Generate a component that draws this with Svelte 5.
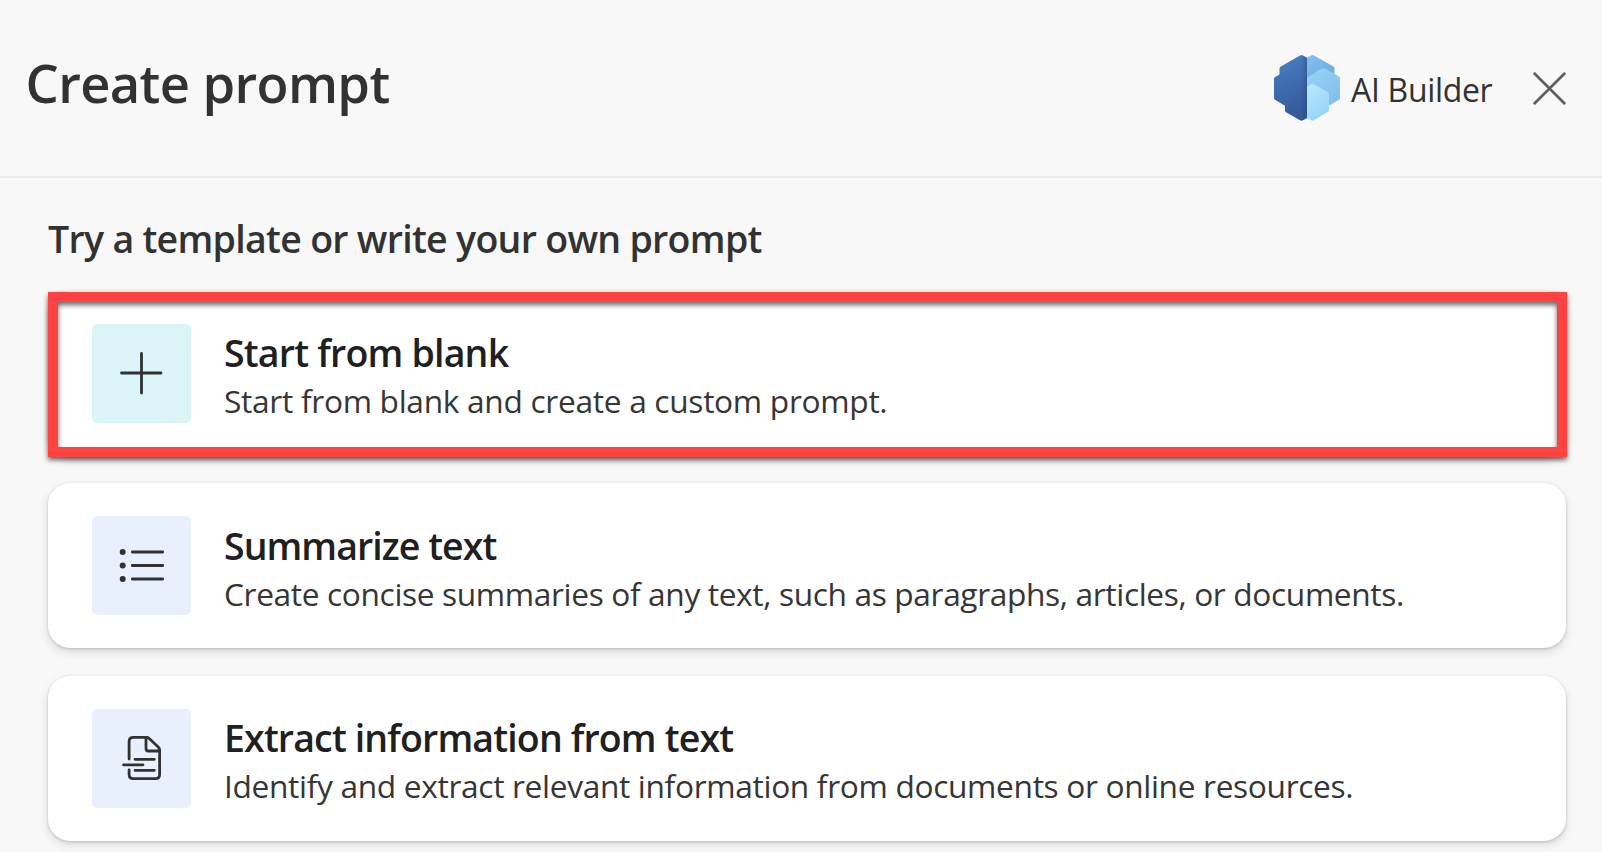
<script>
  const templates = [
    {
      id: 'blank',
      title: 'Start from blank',
      text: 'Start from blank and create a custom prompt.',
      highlighted: true
    },
    {
      id: 'summarize',
      title: 'Summarize text',
      text: 'Create concise summaries of any text, such as paragraphs, articles, or documents.'
    },
    {
      id: 'extract',
      title: 'Extract information from text',
      text: 'Identify and extract relevant information from documents or online resources.'
    }
  ];
  const half =
    'M33 2.800 29 .5q-1.500-.9-3 0L6.800 11.400Q5.500 12.200 5.500 13.500V19.500L1 22.100Q0 22.700 0 24V43Q0 44.200 1 44.800L11 50.700V55.500Q11 56.700 12 57.300L26 65.300Q27.500 66.200 29 65.300L33 63Z';
</script>

<div class="panel">
  <header>
    <h1>Create prompt</h1>
    <div class="brand">
      <svg class="logo" viewBox="0 0 66 66" aria-hidden="true">
        <defs>
          <linearGradient id="navy" x1="0" y1="0" x2="0.2" y2="1">
            <stop offset="0" stop-color="#4a80c4" />
            <stop offset="0.5" stop-color="#3f6db0" />
            <stop offset="1" stop-color="#345a9a" />
          </linearGradient>
          <linearGradient id="edge" x1="0" y1="0" x2="1" y2="0">
            <stop offset="0.8" stop-color="#1d3260" stop-opacity="0" />
            <stop offset="1" stop-color="#1d3260" stop-opacity="0.3" />
          </linearGradient>
          <linearGradient id="sky" x1="0" y1="0" x2="1" y2="1">
            <stop offset="0" stop-color="#83bfee" />
            <stop offset="1" stop-color="#69a8e0" />
          </linearGradient>
          <linearGradient id="light" x1="0" y1="0" x2="0.6" y2="1">
            <stop offset="0" stop-color="#9ad4f7" />
            <stop offset="1" stop-color="#80c0ee" />
          </linearGradient>
          <linearGradient id="pale" x1="0" y1="0" x2="0.5" y2="1">
            <stop offset="0" stop-color="#b8e7fd" />
            <stop offset="1" stop-color="#98d5f8" />
          </linearGradient>
        </defs>
        <path fill="url(#sky)" d="M33 2.8 37 .5q1.500-.9 3 0L59.500 11.500q1 .7 1 2V30H33Z" />
        <path fill="url(#light)" d="M33 22.400 48.200 13.600q1.500-.9 3 0L65 21.500q1 .7 1 2V43q0 1.200-1 1.800L52 52.500H33Z" />
        <path fill="url(#pale)" d="M33 31.600 37 29.300q1.500-.9 3 0L54 37.300q1 .7 1 2V55q0 1.200-1 1.800L40 65.300q-1.500.9-3 0L33 63Z" />
        <path fill="url(#navy)" d={half} />
        <path fill="url(#edge)" d={half} />
      </svg>
      <span>AI Builder</span>
      <button class="close" aria-label="Close">
        <svg viewBox="0 0 33 33"><path d="M.9.900 32.100 32.100M32.100.900.900 32.100" /></svg>
      </button>
    </div>
  </header>

  <main>
    <h2>Try a template or write your own prompt</h2>
    <div class="cards">
      {#each templates as item (item.id)}
        <div class="card {item.id}" class:highlighted={item.highlighted}>
          <svg class="tile" viewBox="0 0 99 99" aria-hidden="true">
            {#if item.id === 'blank'}
              <path d="M49.500 29.500V69M29.500 49H69" />
            {:else if item.id === 'summarize'}
              <g class="dots">
                <circle cx="30.700" cy="36" r="3" />
                <circle cx="30.700" cy="49.500" r="3" />
                <circle cx="30.700" cy="63" r="3" />
              </g>
              <path d="M40.300 36H70.700M40.300 49.500H70.700M40.300 63H70.700" />
            {:else}
              <path
                d="M37.100 50V32.500Q37.100 28.400 41.200 28.400H54.500Q56 28.400 57.200 29.500L66.500 38.200Q67.600 39.300 67.600 41V65.500Q67.600 69.600 63.500 69.600H41.200Q37.100 69.600 37.100 65.500V61M54 28.500V39.500Q54 42 56.500 42H67.500M43 50.300H62.300M31.500 55.800H51M43 61.300H62.300"
              />
            {/if}
          </svg>
          <div class="copy">
            <h3>{item.title}</h3>
            <p>{item.text}</p>
          </div>
          {#if item.highlighted}<div class="frame"></div>{/if}
        </div>
      {/each}
    </div>
  </main>
</div>

<style>
  :global(body) {
    background: #f8f8f8;
    overflow: hidden;
  }
  .panel {
    box-sizing: border-box;
    width: 1602px;
    height: 852px;
    overflow: hidden;
    background: #f8f8f8;
    color: #323232;
    font-family: 'Open Sans', 'Noto Sans', sans-serif;
  }
  h1, h2, h3, p {
    margin: 0;
    white-space: nowrap;
  }
  header {
    box-sizing: border-box;
    height: 178px;
    border-bottom: 2px solid #eaeaea;
    padding: 47px 36px 0 25.500px;
    display: flex;
    justify-content: space-between;
    align-items: flex-start;
  }
  h1 {
    font-size: 52.5px;
    line-height: 72px;
    font-weight: 600;
    letter-spacing: -0.63px;
  }
  .brand {
    display: flex;
    align-items: center;
    padding-top: 8px;
    height: 66px;
  }
  .logo {
    width: 66px;
    height: 66px;
    margin-right: 11px;
  }
  .brand span {
    width: 182px;
    font-size: 32px;
    line-height: 44px;
    padding-top: 3px;
    letter-spacing: -0.32px;
    white-space: nowrap;
  }
  .close {
    border: 0;
    padding: 0;
    background: none;
    width: 33px;
    height: 33px;
  }
  .close svg {
    display: block;
    width: 33px;
    height: 33px;
    fill: none;
    stroke: #605e5c;
    stroke-width: 2.7;
  }
  main {
    padding: 37px 36px 0 48px;
  }
  h2 {
    font-size: 37.5px;
    line-height: 48px;
    font-weight: 600;
    height: 76px;
    letter-spacing: -0.7px;
  }
  .cards {
    display: grid;
    gap: 28px;
  }
  .card {
    position: relative;
    box-sizing: border-box;
    height: 165px;
    padding: 33px 44px;
    display: flex;
    gap: 33px;
    border-radius: 22px;
    background: #fff;
    box-shadow: 0 4px 10px rgba(0, 0, 0, 0.13), 0 1px 3px rgba(0, 0, 0, 0.16);
  }
  .highlighted {
    margin-bottom: -1px;
  }
  .tile {
    flex: none;
    width: 99px;
    height: 99px;
    border-radius: 5px;
    background: #e8f0fe;
    fill: none;
    stroke: #323130;
    stroke-width: 2.8;
    stroke-linecap: round;
    stroke-linejoin: round;
  }
  .blank .tile {
    background: #daf4f7;
  }
  .dots {
    fill: #323130;
    stroke: none;
  }
  .copy {
    padding-top: 5px;
  }
  .summarize .copy {
    padding-top: 6px;
  }
  h3 {
    color: #202020;
    font-size: 37.5px;
    line-height: 48px;
    font-weight: 600;
    letter-spacing: -0.85px;
  }
  .blank h3 {
    letter-spacing: -0.79px;
  }
  .summarize h3 {
    letter-spacing: -0.95px;
  }
  p {
    margin-top: 2px;
    color: #363636;
    font-size: 31.7px;
    line-height: 44px;
    letter-spacing: -0.37px;
  }
  .blank p {
    letter-spacing: -0.31px;
  }
  .extract p {
    letter-spacing: -0.34px;
  }
  .frame {
    position: absolute;
    inset: 1px -1px -1px 0;
    border: 10px solid #ff4343;
    box-shadow: 0 3px 5px rgba(0, 0, 0, 0.6), inset 0 3px 5px rgba(0, 0, 0, 0.6);
  }
</style>
